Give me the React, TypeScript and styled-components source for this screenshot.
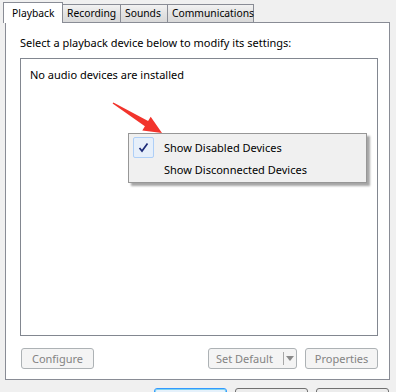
import styled, { createGlobalStyle } from 'styled-components';

const GlobalStyle = createGlobalStyle`
  body {
    margin: 0;
    background: #f0f0f0;
    font-family: 'Noto Sans', 'Open Sans', sans-serif;
    font-size: 11px;
    color: #000;
  }
`;

const Window = styled.div`
  position: relative;
  width: 396px;
  height: 392px;
  overflow: hidden;
  background: #f0f0f0;
`;

const TabStrip = styled.div`
  display: flex;
  align-items: flex-end;
  height: 22px;
  padding-left: 3px;
`;

const Tab = styled.div<{ $active?: boolean; $w: number }>`
  box-sizing: border-box;
  width: ${(p) => p.$w}px;
  height: ${(p) => (p.$active ? 21 : 18)}px;
  border: 1px solid #898c95;
  border-bottom: none;
  margin-left: -1px;
  margin-bottom: ${(p) => (p.$active ? -1 : 0)}px;
  background: ${(p) =>
    p.$active ? '#fff' : 'linear-gradient(#f2f2f2, #e3e3e3 50%, #d9d9d9)'};
  position: relative;
  z-index: ${(p) => (p.$active ? 2 : 1)};
  padding: ${(p) => (p.$active ? '3px 0 0 8px' : '1px 0 0 4px')};
  font-size: 10.3px;
  white-space: nowrap;
  &:first-child {
    margin-left: 0;
  }
`;

const Panel = styled.div`
  box-sizing: border-box;
  width: 385px;
  height: 358px;
  margin-left: 5px;
  border: 1px solid #898c95;
  background: #fff;
  padding: 12px 11px 0 14px;
  display: flex;
  flex-direction: column;
`;

const Label = styled.div`
  height: 15px;
  line-height: 15px;
  margin-bottom: 8px;
`;

const ListBox = styled.div`
  box-sizing: border-box;
  position: relative;
  width: 358px;
  height: 278px;
  border: 1px solid #828790;
  padding: 8px 9px;
  line-height: 15px;
`;

const ContextMenu = styled.div`
  position: absolute;
  left: 107px;
  top: 74px;
  box-sizing: border-box;
  width: 239px;
  height: 50px;
  padding: 2px;
  background: #f0f0f0;
  border: 1px solid #979797;
  box-shadow: 3px 3px 2px rgba(0, 0, 0, 0.35);
  display: flex;
  flex-direction: column;
`;

const MenuItem = styled.div`
  display: flex;
  align-items: center;
  height: 22px;
`;

const CheckCell = styled.div<{ $checked?: boolean }>`
  box-sizing: border-box;
  width: 21px;
  height: 21px;
  margin: 0 10px 0 2px;
  display: flex;
  align-items: center;
  justify-content: center;
  border: 1px solid ${(p) => (p.$checked ? '#aecff7' : 'transparent')};
  border-radius: 2px;
  background: ${(p) => (p.$checked ? '#e6effa' : 'transparent')};
`;

const ButtonRow = styled.div`
  display: flex;
  align-items: center;
  gap: 8px;
  margin-top: 12px;
  margin-left: 1px;
`;

const Spacer = styled.div`
  flex: 1;
`;

const Button = styled.div<{ $w: number }>`
  box-sizing: border-box;
  width: ${(p) => p.$w}px;
  height: 21px;
  border: 1px solid #adb2b5;
  border-radius: 3px;
  background: #f4f4f4;
  color: #838383;
  display: flex;
  align-items: center;
  justify-content: center;
`;

const SplitButton = styled(Button)`
  justify-content: flex-start;
  padding-left: 7px;
`;

const SplitDivider = styled.div`
  width: 1px;
  height: 13px;
  background: #a8a8a8;
  margin-left: auto;
`;

const SplitArrow = styled.div`
  width: 12px;
  display: flex;
  justify-content: center;
`;

const Footer = styled.div`
  display: flex;
  justify-content: flex-end;
  gap: 8px;
  margin-top: 8px;
  padding-right: 7px;
`;

const DialogButton = styled.div<{ $focus?: boolean }>`
  box-sizing: border-box;
  width: 73px;
  height: 23px;
  border: 1px solid ${(p) => (p.$focus ? '#3399ff' : '#707070')};
  box-shadow: ${(p) => (p.$focus ? 'inset 0 0 0 1px #7fd4f0' : 'none')};
  border-radius: 3px;
  background: ${(p) => (p.$focus ? '#e5f1fb' : '#ececec')};
`;

const Annotation = styled.svg`
  position: absolute;
  left: 0;
  top: 0;
  pointer-events: none;
`;

function Check() {
  return (
    <svg width='11' height='11' viewBox='0 0 11 11'>
      <path d='M1.5 6 L4 9 L9.5 1.5' fill='none' stroke='#1c2a78' strokeWidth='1.7' />
    </svg>
  );
}

export default function App() {
  return (
    <Window>
      <GlobalStyle />
      <TabStrip>
        <Tab $active $w={60}>Playback</Tab>
        <Tab $w={59}>Recording</Tab>
        <Tab $w={48}>Sounds</Tab>
        <Tab $w={87}>Communications</Tab>
      </TabStrip>
      <Panel>
        <Label>Select a playback device below to modify its settings:</Label>
        <ListBox>
          No audio devices are installed
          <ContextMenu>
            <MenuItem>
              <CheckCell $checked>
                <Check />
              </CheckCell>
              Show Disabled Devices
            </MenuItem>
            <MenuItem>
              <CheckCell />
              Show Disconnected Devices
            </MenuItem>
          </ContextMenu>
        </ListBox>
        <ButtonRow>
          <Button $w={73}>Configure</Button>
          <Spacer />
          <SplitButton $w={89}>
            Set Default
            <SplitDivider />
            <SplitArrow>
              <svg width='8' height='5' viewBox='0 0 8 5'>
                <path d='M0 0 H8 L4 5 Z' fill='#8a8a8a' />
              </svg>
            </SplitArrow>
          </SplitButton>
          <Button $w={73}>Properties</Button>
        </ButtonRow>
      </Panel>
      <Footer>
        <DialogButton $focus />
        <DialogButton />
        <DialogButton />
      </Footer>
      <Annotation width='396' height='392'>
        <polygon
          points='113.4,102.4 148.1,121 150.7,116.7 162,133 142.3,130.5 144.9,126.2 112.6,103.6'
          fill='#f2342c'
        />
      </Annotation>
    </Window>
  );
}
